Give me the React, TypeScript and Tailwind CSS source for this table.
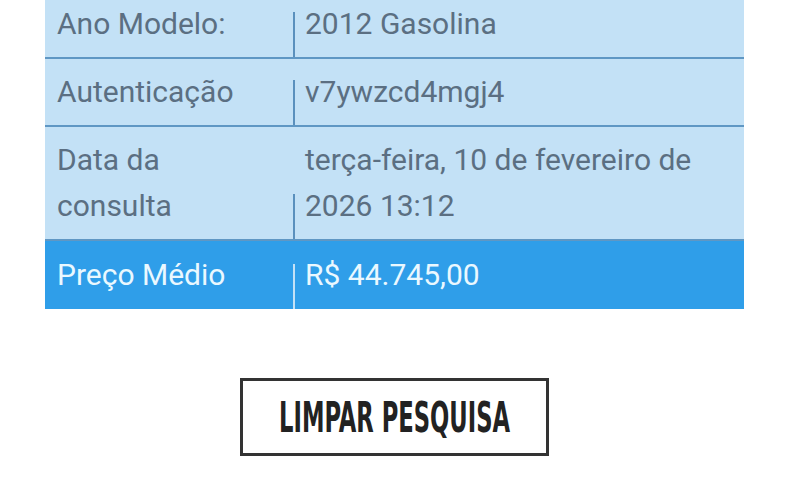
import React from 'react';

const rows = [
  { label: ['Ano Modelo:'], value: ['2012 Gasolina'] },
  { label: ['Autenticação'], value: ['v7ywzcd4mgj4'] },
  { label: ['Data da', 'consulta'], value: ['terça-feira, 10 de fevereiro de', '2026 13:12'] },
];

const App: React.FC = () => {
  return (
    <div className="w-[800px] h-[480px] bg-white overflow-hidden" style={{ fontFamily: 'Roboto, "Noto Sans", sans-serif' }}>
      <div className="ml-[45px] w-[699px] -mt-[9px] bg-[#c3e1f6]">
        {rows.map((row, i) => (
          <div key={i} className="flex border-b-2 border-[#5f97c4] text-[30px] leading-[46px] text-[#5b6f82]">
            <div className="w-[248px] py-[10px] pl-[12px]">
              {row.label.map(l => <div key={l}>{l}</div>)}
            </div>
            <div className="self-end w-[2px] h-[45px] bg-[#5a90bd]" />
            <div className="flex-1 py-[10px] pl-[10px]">
              {row.value.map(v => <div key={v}>{v}</div>)}
            </div>
          </div>
        ))}
        <div className="flex bg-[#2f9ee9] text-[30px] leading-[46px] text-[#eaf8ff]">
          <div className="w-[248px] py-[11px] pl-[12px]">Preço Médio</div>
          <div className="self-end w-[2px] h-[45px] bg-[#c3e1f6]" />
          <div className="flex-1 py-[11px] pl-[10px]">R$ 44.745,00</div>
        </div>
      </div>

      <div className="flex mt-[69px] ml-[240px]">
        <button className="w-[309px] h-[78px] border-[3px] border-[#333333] bg-white flex items-center justify-center">
          <span
            className="text-[42px] font-bold text-[#222222] whitespace-nowrap inline-block scale-x-[0.6]"
            style={{ fontFamily: '"Liberation Sans Narrow", "DejaVu Sans Condensed", "Liberation Sans", sans-serif' }}
          >
            LIMPAR PESQUISA
          </span>
        </button>
      </div>
    </div>
  );
};

export default App;
